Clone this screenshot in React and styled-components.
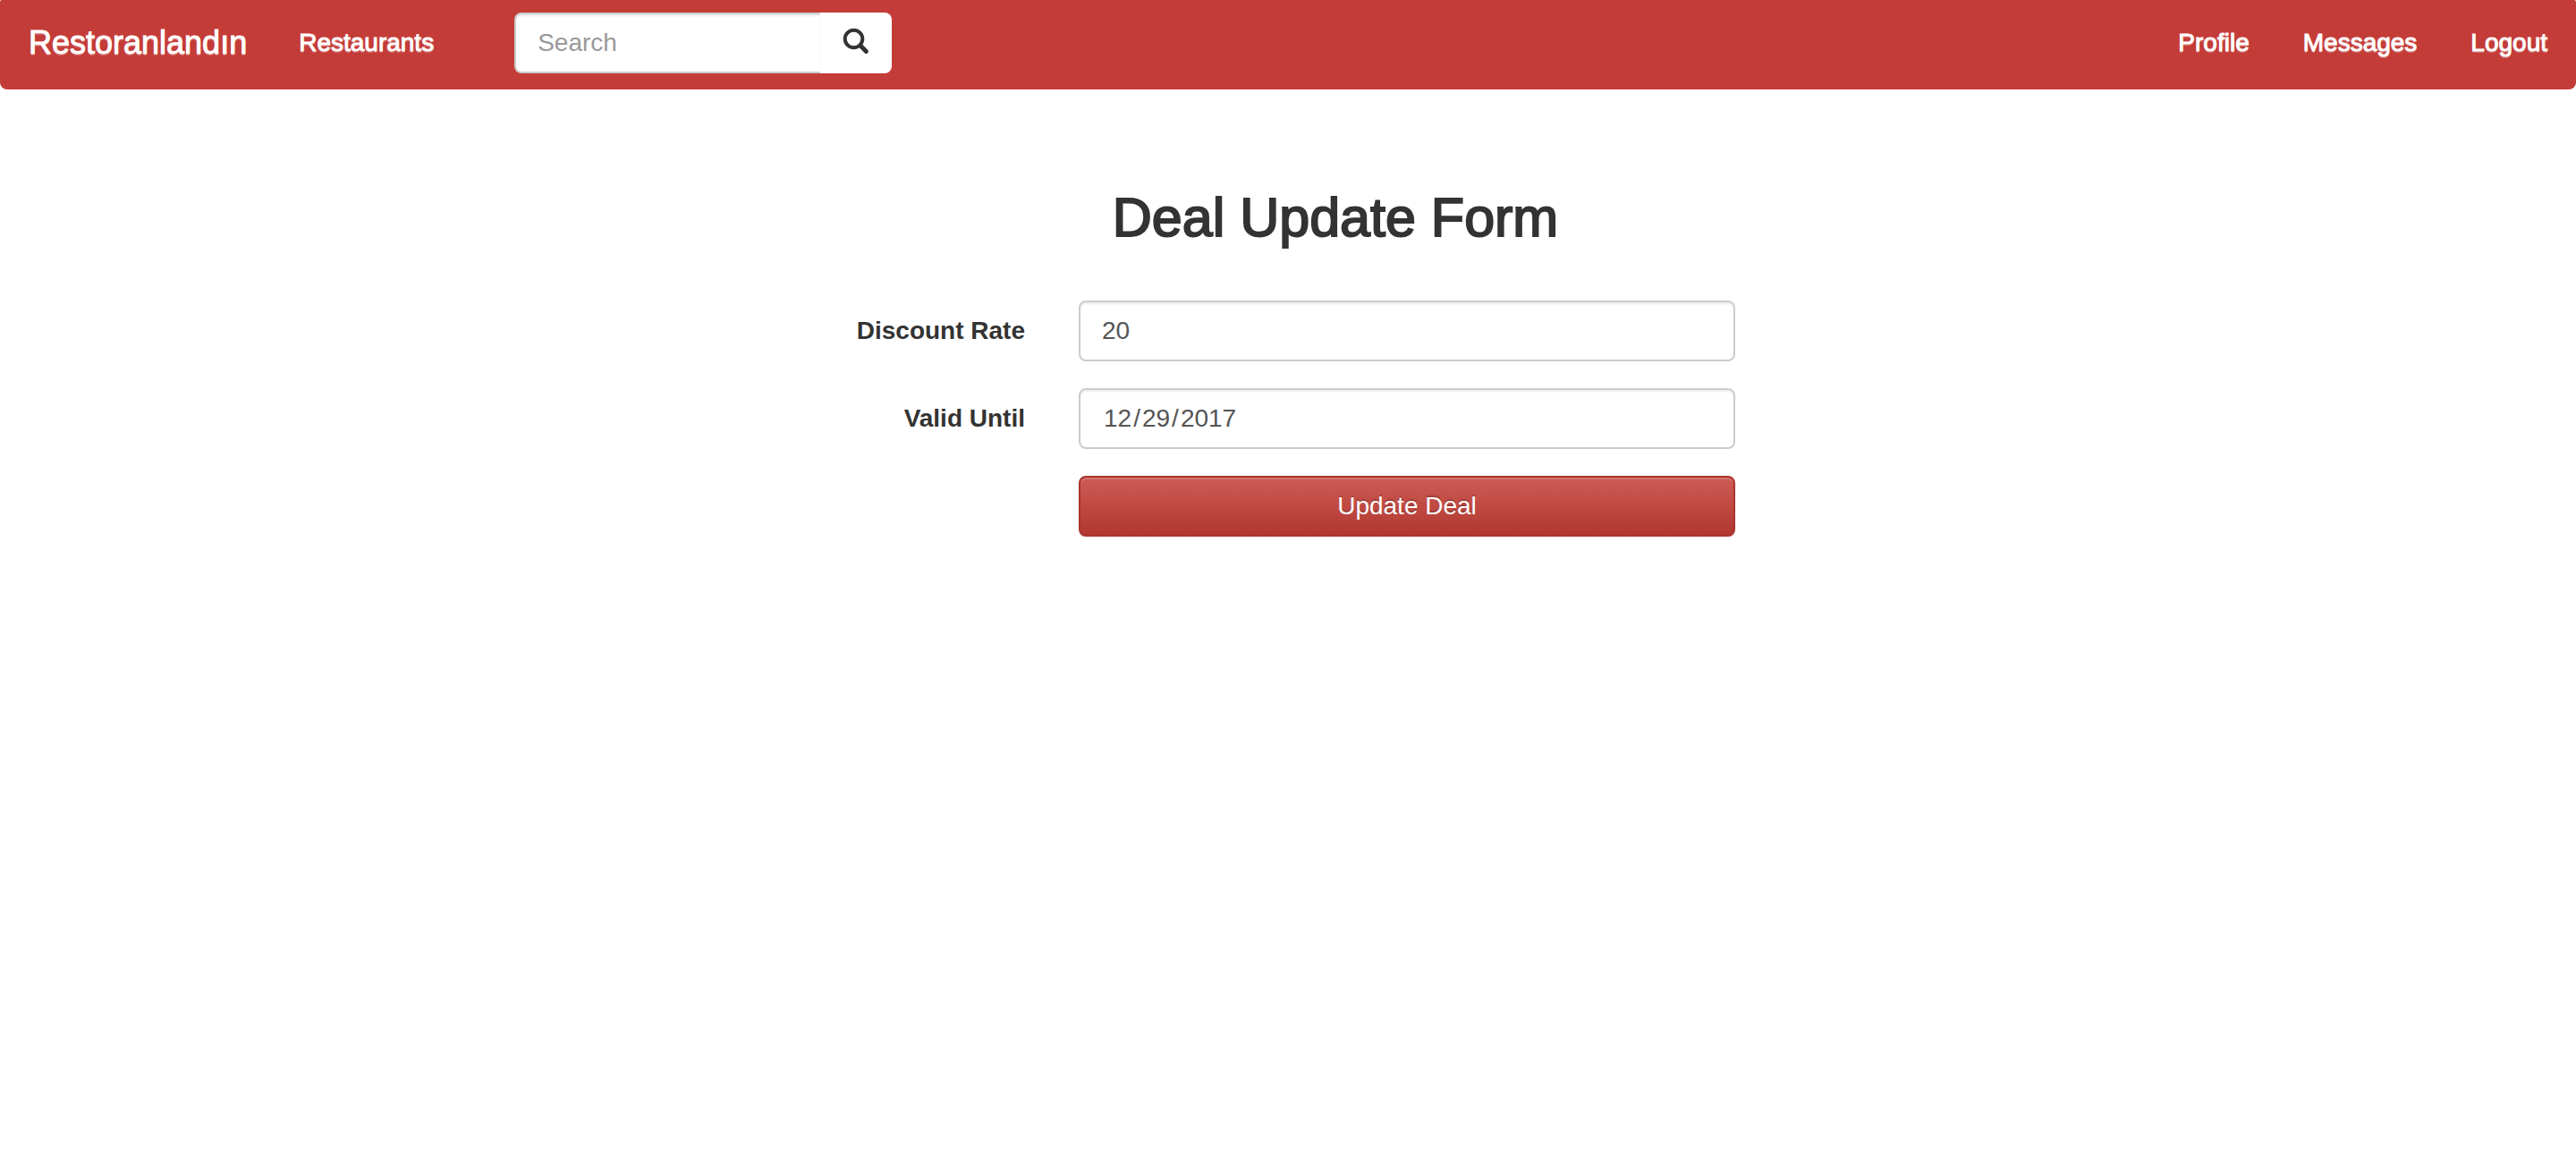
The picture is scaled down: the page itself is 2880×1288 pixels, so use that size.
import React from "react";
import styled, { createGlobalStyle, css } from "styled-components";

const GlobalStyle = createGlobalStyle`
  *, *::before, *::after { box-sizing: border-box; }
  body {
    margin: 0;
    background: #fff;
    color: #333;
    font-family: "Liberation Sans", Arial, sans-serif;
    font-size: 28px;
    line-height: 40px;
  }
  input, button { font: inherit; }
`;

const Navbar = styled.nav`
  display: flex;
  align-items: center;
  justify-content: space-between;
  min-height: 100px;
  padding: 0 2px;
  background: #c43c38;
  border-radius: 2px 2px 8px 8px;
`;

const NavGroup = styled.div`
  display: flex;
  align-items: center;
`;

const NavLink = styled.a`
  padding: 28px 30px 32px;
  color: #fff;
  font-size: 28px;
  text-decoration: none;
  text-shadow: 0 2px 0 rgba(255, 255, 255, 0.25);
  -webkit-text-stroke: 1px #fff;
`;

const Brand = styled(NavLink)`
  padding-right: 28px;
  font-size: 36px;
`;

const SearchForm = styled.form`
  display: flex;
  margin: 14px 60px 18px;
`;

const fieldBase = css`
  height: 68px;
  padding: 12px 24px;
  border: 2px solid #ccc;
  border-radius: 8px;
  background: #fff;
  box-shadow: inset 0 2px 2px rgba(0, 0, 0, 0.075);
  color: #555;
  outline: none;
`;

const SearchInput = styled.input`
  ${fieldBase}
  width: 342px;
  border-right: 0;
  border-radius: 8px 0 0 8px;
  &::placeholder { color: #999; opacity: 1; }
`;

const SearchButton = styled.button`
  display: flex;
  align-items: center;
  justify-content: center;
  width: 80px;
  height: 68px;
  padding: 0 0 4px;
  border: 0;
  border-radius: 0 8px 8px 0;
  background: #fff;
  color: #333;
`;

const Page = styled.main`
  width: 100%;
  max-width: 1060px;
  margin: 0 auto;
  padding-top: 110px;
`;

const Title = styled.h1`
  margin: 0 0 60px;
  padding-left: 106px;
  font-size: 61px;
  font-weight: 400;
  line-height: 66px;
  text-align: center;
  -webkit-text-stroke: 2px #333;
`;

const DealForm = styled.form`
  display: grid;
  gap: 30px;
`;

const Row = styled.div`
  display: grid;
  grid-template-columns: 266px 1fr;
  align-items: center;
`;

const Label = styled.label`
  padding: 0 30px;
  font-weight: 700;
  text-align: right;
`;

const Cell = styled.div`
  grid-column: 2;
  display: flex;
  padding: 0 30px;
`;

const Field = styled.input`
  ${fieldBase}
  flex: 1;
  min-width: 0;
  &::-webkit-calendar-picker-indicator { display: none; }
  &::-webkit-datetime-edit-fields-wrapper { padding: 0; }
  &::-webkit-datetime-edit-month-field,
  &::-webkit-datetime-edit-day-field,
  &::-webkit-datetime-edit-year-field { padding: 0 2px; }
`;

const SubmitButton = styled.button`
  flex: 1;
  height: 68px;
  padding: 12px 24px;
  border: 2px solid #ac332d;
  border-radius: 8px;
  background: linear-gradient(#cc5b55, #c04a42 50%, #b0372f);
  box-shadow: inset 0 2px 0 rgba(255, 255, 255, 0.15), 0 2px 2px rgba(0, 0, 0, 0.075);
  color: #fff;
  text-shadow: 0 -2px 0 rgba(0, 0, 0, 0.2);
`;

function SearchIcon() {
  return (
    <svg width="30" height="30" viewBox="0 0 30 30" fill="none" stroke="currentColor" aria-hidden="true">
      <circle cx="12.5" cy="12.5" r="9.8" strokeWidth="4" />
      <path d="M20 20l6.4 6.4" strokeWidth="5" strokeLinecap="round" />
    </svg>
  );
}

export default function App() {
  return (
    <>
      <GlobalStyle />
      <Navbar>
        <NavGroup>
          <Brand href="#home">Restoranlandın</Brand>
          <NavLink href="#restaurants">Restaurants</NavLink>
          <SearchForm role="search">
            <SearchInput type="text" placeholder="Search" aria-label="Search" />
            <SearchButton type="button" aria-label="Submit search">
              <SearchIcon />
            </SearchButton>
          </SearchForm>
        </NavGroup>
        <NavGroup>
          <NavLink href="#profile">Profile</NavLink>
          <NavLink href="#messages">Messages</NavLink>
          <NavLink href="#logout">Logout</NavLink>
        </NavGroup>
      </Navbar>
      <Page>
        <Title>Deal Update Form</Title>
        <DealForm>
          <Row>
            <Label htmlFor="rate">Discount Rate</Label>
            <Cell>
              <Field id="rate" type="text" inputMode="numeric" defaultValue="20" />
            </Cell>
          </Row>
          <Row>
            <Label htmlFor="until">Valid Until</Label>
            <Cell>
              <Field id="until" type="date" defaultValue="2017-12-29" />
            </Cell>
          </Row>
          <Row>
            <Cell>
              <SubmitButton type="button">Update Deal</SubmitButton>
            </Cell>
          </Row>
        </DealForm>
      </Page>
    </>
  );
}
